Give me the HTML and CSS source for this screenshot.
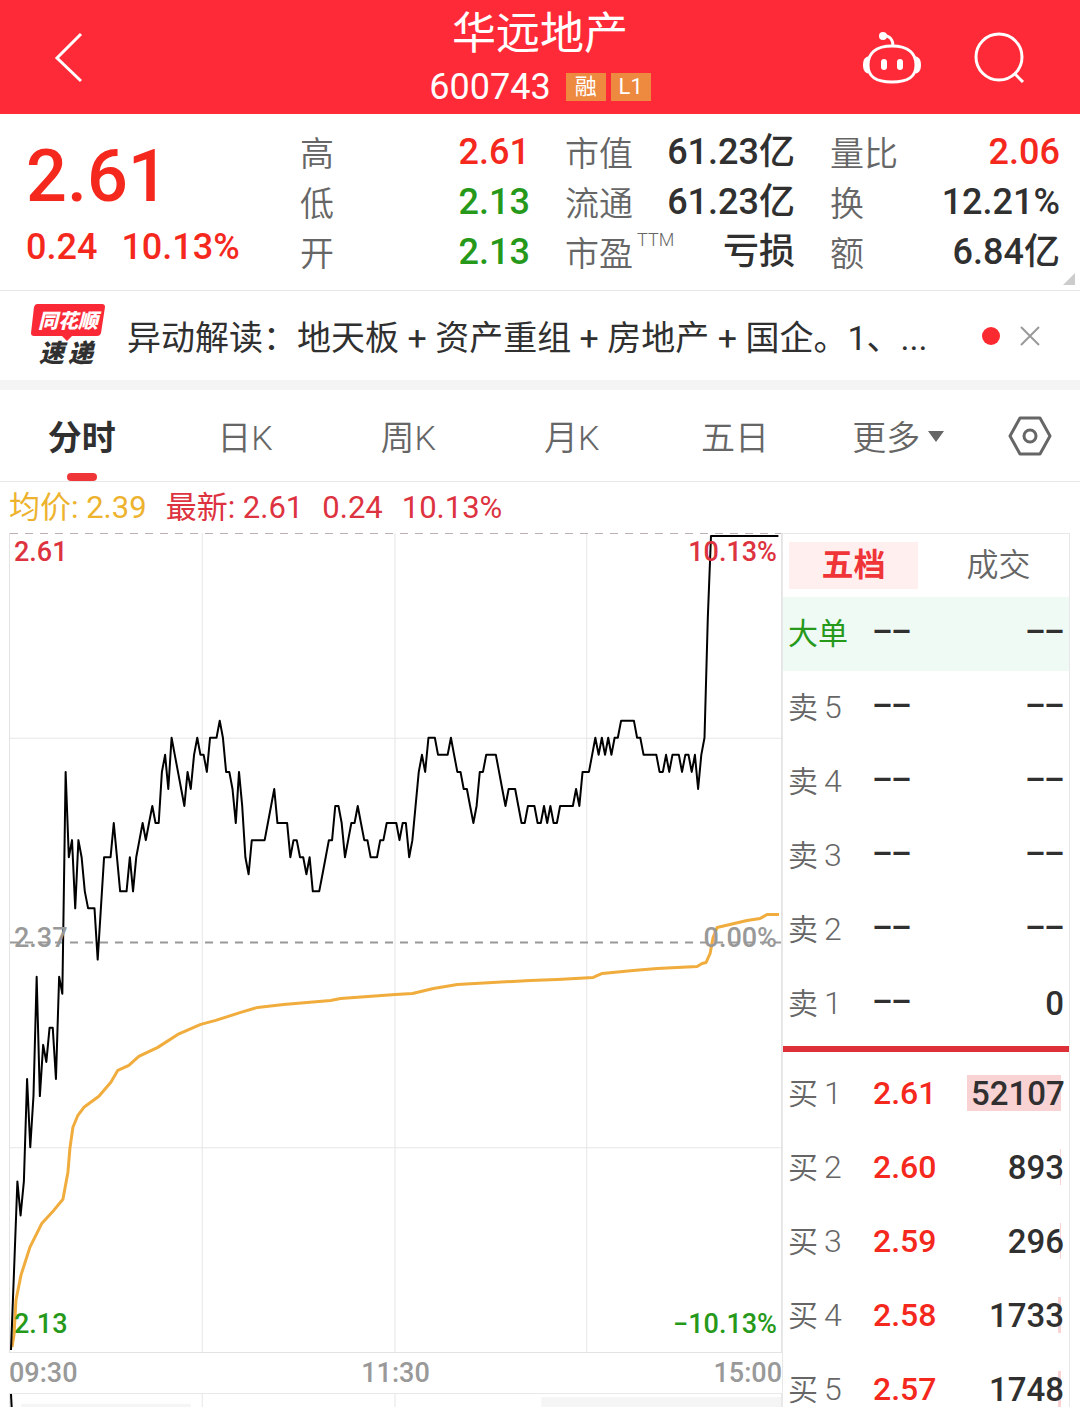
FILE: index.html
```html
<!DOCTYPE html>
<html lang="zh-CN">
<head>
    <meta charset="UTF-8">
    <meta name="viewport" content="width=device-width, initial-scale=1.0">
    <title>华远地产 600743</title>
    <link rel="stylesheet" href="styles.css">
</head>
<body>
    <header class="header">
        <button class="icon-btn" type="button" aria-label="返回">
            <svg width="30" height="52" viewBox="0 0 30 52"><path d="M27 3 L3 27 L27 50" fill="none" stroke="#fff" stroke-width="3"/></svg>
        </button>
        <div class="title">
            <h1>华远地产</h1>
            <div class="code">
                <span>600743</span>
                <span class="tag">融</span>
                <span class="tag">L1</span>
            </div>
        </div>
        <div class="actions">
            <button class="icon-btn" type="button" aria-label="智能助手">
                <svg width="60" height="56" viewBox="0 0 60 56" fill="none" stroke="#fff" stroke-width="3">
                    <path d="M30 17 C47 17 54 25 54 36 C54 48 46 53 30 53 C14 53 6 48 6 36 C6 25 13 17 30 17 Z"/>
                    <path d="M31 17 C31 10 28 7 21 6"/>
                    <circle cx="21" cy="7" r="4" fill="#fff" stroke="none"/>
                    <path d="M5 29 C1 31 1 41 5 43 Z M55 29 C59 31 59 41 55 43 Z" fill="#fff" stroke-width="2"/>
                    <path d="M22 33 V38 M38 33 V38" stroke-width="6" stroke-linecap="round"/>
                </svg>
            </button>
            <button class="icon-btn" type="button" aria-label="搜索">
                <svg width="52" height="52" viewBox="0 0 52 52" fill="none" stroke="#fff" stroke-width="3">
                    <circle cx="25" cy="26" r="23"/>
                    <path d="M40 42 L49 51"/>
                </svg>
            </button>
        </div>
    </header>

    <section class="quote">
        <div class="price up">
            <div class="price-now">2.61</div>
            <div class="price-change"><span>0.24</span><span>10.13%</span></div>
        </div>
        <div class="stats">
            <dl>
                <div><dt>高</dt><dd class="up">2.61</dd></div>
                <div><dt>低</dt><dd class="down">2.13</dd></div>
                <div><dt>开</dt><dd class="down">2.13</dd></div>
            </dl>
            <dl>
                <div><dt>市值</dt><dd>61.23亿</dd></div>
                <div><dt>流通</dt><dd>61.23亿</dd></div>
                <div><dt>市盈<sup>TTM</sup></dt><dd>亏损</dd></div>
            </dl>
            <dl>
                <div><dt>量比</dt><dd class="up">2.06</dd></div>
                <div><dt>换</dt><dd>12.21%</dd></div>
                <div><dt>额</dt><dd>6.84亿</dd></div>
            </dl>
        </div>
        <span class="corner"></span>
    </section>

    <section class="news">
        <svg class="news-logo" width="74" height="64" viewBox="0 0 74 64">
            <path d="M6 0 H71 Q74 0 74 3 L70 29 Q69 32 66 32 H41 L36 37 L31 32 H3 Q0 32 0 29 L3 3 Q4 0 6 0 Z" fill="#fa2935"/>
            <text class="logo-top" x="7" y="24">同花顺</text>
            <text class="logo-bottom" x="8" y="58">速</text>
            <text class="logo-bottom" x="37" y="58">递</text>
        </svg>
        <a class="news-text" href="#">异动解读：地天板 + 资产重组 + 房地产 + 国企。1、...</a>
        <span class="dot"></span>
        <button class="icon-btn" type="button" aria-label="关闭">
            <svg width="20" height="20" viewBox="0 0 20 20"><path d="M1 1 L19 19 M19 1 L1 19" stroke="#999" stroke-width="2"/></svg>
        </button>
    </section>

    <nav class="tabs">
        <button class="tab active" type="button">分时</button>
        <button class="tab" type="button">日K</button>
        <button class="tab" type="button">周K</button>
        <button class="tab" type="button">月K</button>
        <button class="tab" type="button">五日</button>
        <button class="tab" type="button">更多<span class="caret"></span></button>
        <button class="icon-btn settings" type="button" aria-label="设置">
            <svg width="44" height="40" viewBox="0 0 44 40" fill="none" stroke="#666" stroke-width="3">
                <path d="M12 2 H32 L42 20 L32 38 H12 L2 20 Z" stroke-linejoin="round"/>
                <circle cx="22" cy="20" r="6"/>
            </svg>
        </button>
    </nav>

    <div class="legend">
        <span class="avg">均价: 2.39</span>
        <span>最新: 2.61</span>
        <span>0.24</span>
        <span>10.13%</span>
    </div>

    <main class="main">
        <div class="left">
            <div class="chart">
                <span class="lbl top-left up">2.61</span>
                <span class="lbl top-right up">10.13%</span>
                <span class="lbl mid-left">2.37</span>
                <span class="lbl mid-right">0.00%</span>
                <span class="lbl bottom-left down">2.13</span>
                <span class="lbl bottom-right down">−10.13%</span>
                <svg viewBox="0 0 772 820" preserveAspectRatio="none">
                    <g class="grid">
                        <path d="M0 205.5 H772 M0 615.5 H772 M192.5 0 V820 M385.5 0 V820 M577.5 0 V820"/>
                    </g>
                    <path class="dash-top" d="M0 0.5 H772"/>
                    <path class="dash-mid" d="M0 410 H772"/>
                    <polyline id="avg" class="avg-line"/>
                    <polyline id="price" class="price-line"/>
                </svg>
            </div>
            <div class="times"><span>09:30</span><span>11:30</span><span>15:00</span></div>
            <div class="volume">
                <svg viewBox="0 0 772 80" preserveAspectRatio="none">
                    <path class="grid" d="M192.5 0 V80 M385.5 0 V80"/>
                    <path d="M11 10 H181 V80 H11 Z M532 3 H772 V80 H532 Z" fill="#f5f5f5"/>
                    <path class="price-line" d="M1 0 L2 20"/>
                </svg>
            </div>
        </div>

        <aside class="book">
            <div class="book-tabs">
                <button class="active" type="button">五档</button>
                <button type="button">成交</button>
            </div>
            <table>
                <tbody>
                    <tr class="big"><th>大单</th><td class="none">––</td><td class="none">––</td></tr>
                    <tr><th>卖<i>5</i></th><td class="none">––</td><td class="none">––</td></tr>
                    <tr><th>卖<i>4</i></th><td class="none">––</td><td class="none">––</td></tr>
                    <tr><th>卖<i>3</i></th><td class="none">––</td><td class="none">––</td></tr>
                    <tr><th>卖<i>2</i></th><td class="none">––</td><td class="none">––</td></tr>
                    <tr><th>卖<i>1</i></th><td class="none">––</td><td>0</td></tr>
                    <tr class="divider"><td colspan="3"><hr></td></tr>
                    <tr><th>买<i>1</i></th><td class="up">2.61</td><td><span class="bar" style="width: 94px"></span><span class="vol">52107</span></td></tr>
                    <tr><th>买<i>2</i></th><td class="up">2.60</td><td><span class="bar" style="width: 1px"></span><span class="vol">893</span></td></tr>
                    <tr><th>买<i>3</i></th><td class="up">2.59</td><td><span class="bar" style="width: 1px"></span><span class="vol">296</span></td></tr>
                    <tr><th>买<i>4</i></th><td class="up">2.58</td><td><span class="bar" style="width: 3px"></span><span class="vol">1733</span></td></tr>
                    <tr><th>买<i>5</i></th><td class="up">2.57</td><td><span class="bar" style="width: 3px"></span><span class="vol">1748</span></td></tr>
                </tbody>
            </table>
        </aside>
    </main>

    <script src="script.js"></script>
</body>
</html>
```

FILE: styles.css
```css
* {
    box-sizing: border-box;
}
body {
    margin: 0;
    height: 100vh;
    overflow: hidden;
    background-color: #fff;
    color: #303030;
    font-family: Roboto, "Noto Sans CJK SC", sans-serif;
}
button {
    padding: 0;
    border: none;
    background: none;
    color: inherit;
    font: inherit;
}
svg {
    display: block;
}
.up {
    color: #f5281e;
}
.down {
    color: #26991a;
}

/* header */
.header {
    display: grid;
    grid-template-columns: 1fr auto 1fr;
    height: 114px;
    padding: 0 54px;
    background-color: #ff2a38;
    color: #fff;
}
.header > .icon-btn {
    justify-self: start;
}
.title {
    display: flex;
    flex-direction: column;
    align-items: center;
}
.title h1 {
    margin: 0;
    font-size: 44px;
    font-weight: 400;
    line-height: 68px;
}
.code {
    display: flex;
    align-items: center;
    gap: 5px;
    font-size: 36px;
    line-height: 38px;
}
.code span:first-child {
    margin-right: 10px;
}
.tag {
    width: 40px;
    background-color: #ee8a40;
    font-size: 22px;
    line-height: 28px;
    text-align: center;
}
.actions {
    display: flex;
    justify-content: flex-end;
    align-items: center;
    gap: 52px;
}

/* quote */
.quote {
    position: relative;
    display: flex;
    padding: 13px 20px 13px 26px;
    border-bottom: 1px solid #e8e8e8;
}
.price {
    flex: 0 0 274px;
    font-weight: 500;
}
.price-now {
    font-size: 72px;
    line-height: 100px;
}
.price-change {
    display: flex;
    gap: 24px;
    font-size: 36px;
    line-height: 40px;
}
.stats {
    flex: 1;
    display: grid;
    grid-template-columns: repeat(3, 1fr);
    gap: 35px;
}
.stats dl {
    margin: 0;
}
.stats dl div {
    display: flex;
    justify-content: space-between;
    height: 50px;
    line-height: 50px;
}
.stats dt {
    color: #666;
    font-size: 34px;
    font-weight: 350;
    line-height: 54px;
}
.stats sup {
    margin-left: 4px;
    font-size: 18px;
    line-height: 0;
    vertical-align: 20px;
}
.stats dd {
    margin: 0;
    font-size: 36px;
    font-weight: 500;
}
.corner {
    position: absolute;
    right: 5px;
    bottom: 5px;
    border: 6px solid #ccc;
    border-top-color: transparent;
    border-left-color: transparent;
}

/* news */
.news {
    display: flex;
    align-items: center;
    height: 99px;
    padding: 0 40px 0 31px;
    border-bottom: 10px solid #f4f4f4;
}
.logo-top {
    fill: #fff;
    font-size: 20px;
    font-style: italic;
    font-weight: 900;
}
.logo-bottom {
    fill: #303030;
    font-size: 25px;
    font-style: italic;
    font-weight: 900;
}
.news-text {
    flex: 1;
    margin: 0 20px 0 22px;
    overflow: hidden;
    color: #303030;
    font-size: 34px;
    text-decoration: none;
    white-space: nowrap;
}
.dot {
    width: 18px;
    height: 18px;
    margin-right: 20px;
    border-radius: 50%;
    background-color: #fa2a30;
}

/* period tabs */
.tabs {
    display: flex;
    height: 92px;
    border-bottom: 1px solid #e8e8e8;
}
.tab {
    position: relative;
    flex: 1;
    color: #666;
    font-size: 34px;
    font-weight: 350;
}
.tab.active {
    color: #303030;
    font-weight: 700;
}
.tab.active::after {
    content: "";
    position: absolute;
    left: 50%;
    bottom: 0;
    width: 30px;
    height: 8px;
    margin-left: -15px;
    border-radius: 4px;
    background-color: #f03538;
}
.caret {
    display: inline-block;
    margin-left: 8px;
    border: 8px solid transparent;
    border-top: 11px solid #666;
    border-bottom: none;
    vertical-align: 8px;
}
.settings {
    display: flex;
    justify-content: center;
    align-items: center;
    flex: 0 0 100px;
}

/* legend */
.legend {
    display: flex;
    gap: 19px;
    padding: 0 9px;
    color: #dd3340;
    font-size: 31px;
    line-height: 51px;
}
.legend .avg {
    color: #edb32e;
}

/* chart */
.main {
    display: flex;
    padding: 0 10px 0 9px;
}
.left {
    flex: 1;
    min-width: 0;
}
.chart {
    position: relative;
    height: 820px;
    border: 1px solid #e4e4e4;
    border-top: none;
}
.chart svg,
.volume svg {
    width: 100%;
    height: 100%;
}
.chart path,
.chart polyline,
.volume path {
    vector-effect: non-scaling-stroke;
}
.grid {
    fill: none;
    stroke: #e6e6e6;
}
.dash-top {
    stroke: #bdb0b0;
    stroke-dasharray: 8 7;
}
.dash-mid {
    stroke: #999;
    stroke-width: 2;
    stroke-dasharray: 8 7;
}
.avg-line {
    fill: none;
    stroke: #f0ac3c;
    stroke-width: 3;
    stroke-linejoin: round;
}
.price-line {
    fill: none;
    stroke: #000;
    stroke-width: 2;
    stroke-linejoin: round;
}
.lbl {
    position: absolute;
    font-size: 27px;
    font-weight: 500;
    line-height: 36px;
}
.mid-left,
.mid-right {
    top: 387px;
    color: #999;
}
.top-left,
.top-right {
    top: 1px;
    color: #dd3340;
}
.bottom-left,
.bottom-right {
    bottom: 10px;
}
.top-left,
.mid-left,
.bottom-left {
    left: 4px;
}
.top-right,
.mid-right,
.bottom-right {
    right: 4px;
}
.times {
    display: flex;
    justify-content: space-between;
    color: #999;
    font-size: 27px;
    font-weight: 500;
    line-height: 40px;
}
.volume {
    height: 80px;
    border: 1px solid #e8e8e8;
}

/* order book */
.book {
    flex: 0 0 288px;
    border: 1px solid #e8e8e8;
}
.book-tabs {
    display: flex;
    gap: 16px;
    padding: 8px 6px;
    font-size: 32px;
    line-height: 47px;
}
.book-tabs button {
    flex: 1;
    color: #666;
    font-weight: 350;
}
.book-tabs .active {
    background-color: #fff0ef;
    color: #f03538;
    font-weight: 700;
}
.book table {
    width: 100%;
    border-collapse: collapse;
    table-layout: fixed;
}
.book tr {
    height: 74px;
}
.book th {
    width: 90px;
    padding: 0 0 6px 5px;
    color: #666;
    font-size: 30px;
    font-weight: 350;
    text-align: left;
}
.book th i {
    margin-left: 6px;
    font-size: 32px;
    font-style: normal;
}
.book td {
    position: relative;
    padding: 0 5px 2px 0;
    font-size: 32px;
    font-weight: 500;
}
.book td:last-child {
    font-size: 33px;
    text-align: right;
}
.book .none,
.book .none:last-child {
    padding-bottom: 14px;
    font-family: "Noto Sans", sans-serif;
    font-size: 38px;
    line-height: 50px;
}
.book .big {
    background-color: #f0faf5;
}
.book .big th {
    color: #26991a;
    font-weight: 400;
}
.book .divider {
    height: 16px;
}
.book .divider td {
    padding: 0;
}
.book hr {
    height: 6px;
    margin: 0;
    border: none;
    background-color: #dd3038;
}
.vol {
    position: relative;
}
.bar {
    position: absolute;
    right: 8px;
    top: 18px;
    height: 36px;
    background-color: #f9d2d4;
}
```

FILE: script.js
```js
// one price per minute, in cents
const prices = [
    213, 218, 223, 221, 223, 229, 225, 228, 235, 228, 231, 230, 232, 232, 229, 235, 234, 247, 242, 243,
    239, 243, 242, 240, 239, 239, 239, 236, 239, 242, 242, 242, 244, 242, 240, 240, 240, 242, 240, 242,
    243, 244, 243, 244, 245, 244, 244, 247, 248, 246, 249, 248, 247, 246, 245, 247, 246, 248, 249, 248,
    248, 247, 249, 249, 249, 250, 249, 247, 247, 246, 244, 247, 245, 242, 241, 243, 243, 243, 243, 243,
    244, 245, 246, 244, 244, 244, 244, 242, 243, 243, 242, 242, 241, 242, 240, 240, 240, 241, 242, 243,
    243, 245, 245, 244, 242, 243, 244, 244, 245, 244, 243, 243, 242, 242, 242, 243, 243, 244, 244, 244,
    244, 243, 244, 244, 242, 243, 245, 247, 248, 247, 249, 249, 249, 248, 248, 248, 248, 249, 248, 247,
    247, 246, 246, 245, 244, 245, 247, 247, 248, 248, 248, 248, 247, 246, 245, 246, 246, 246, 245, 244,
    244, 245, 245, 245, 244, 244, 245, 244, 245, 244, 244, 245, 245, 245, 245, 245, 246, 245, 247, 247,
    247, 248, 249, 248, 249, 248, 249, 248, 249, 249, 250, 250, 250, 250, 250, 249, 249, 248, 248, 248,
    248, 248, 247, 247, 248, 247, 248, 248, 248, 247, 248, 248, 247, 248, 246, 248, 249, 256, 261, 261
];
while (prices.length < 240) {
    prices.push(261);
}

// average price line, chart coordinates
const average = [
    [2, 815], [4, 803], [6, 768], [11, 743], [20, 715], [32, 691], [44, 678], [53, 667], [58, 640], [60, 616],
    [63, 595], [68, 583], [74, 575], [89, 564], [101, 550], [108, 538], [119, 533], [129, 524], [148, 515],
    [168, 502], [191, 492], [206, 488], [231, 480], [248, 475], [274, 472], [321, 468], [331, 466], [386, 462],
    [403, 461], [424, 456], [448, 452], [521, 448], [548, 447], [584, 445], [593, 441], [624, 438], [648, 436],
    [688, 434], [693, 431], [697, 430], [701, 421], [704, 405], [708, 395], [738, 388], [751, 386], [758, 382],
    [770, 382]
];

const pricePoints = prices.map((price, i) => {
    const x = 1 + i * 770 / 239.5;
    const y = Math.min(818, Math.max(3, (261 - price) * 820 / 48));
    return `${x.toFixed(1)},${y.toFixed(1)}`;
});

document.getElementById('price').setAttribute('points', pricePoints.join(' '));
document.getElementById('avg').setAttribute('points', average.join(' '));
```
